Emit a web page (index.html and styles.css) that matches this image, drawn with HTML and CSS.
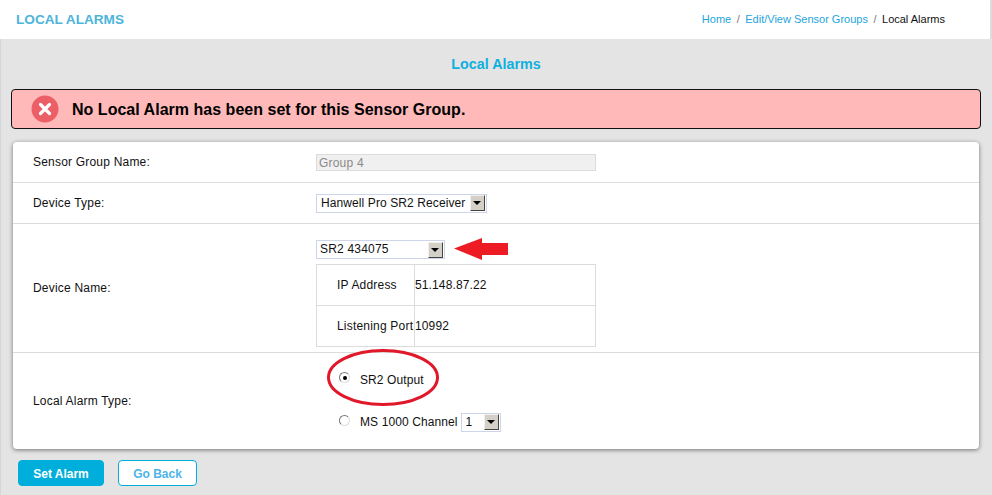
FILE: index.html
```html
<!DOCTYPE html>
<html lang="en">
<head>
<meta charset="utf-8">
<title>Local Alarms</title>
<link rel="stylesheet" href="styles.css">
</head>
<body>
<header class="topbar">
  <h1 class="page-name">LOCAL ALARMS</h1>
  <nav class="crumbs">
    <a href="#">Home</a><span class="sep">/</span><a href="#">Edit/View Sensor Groups</a><span class="sep">/</span><span class="current">Local Alarms</span>
  </nav>
</header>
<main class="content">
  <h2 class="title">Local Alarms</h2>
  <div class="alert">
    <svg class="alert-icon" viewBox="0 0 28 28" width="28" height="28" aria-hidden="true">
      <circle cx="14" cy="14" r="13.5" fill="#ec5f67"/>
      <path d="M9.5 9.5 L18.5 18.5 M18.5 9.5 L9.5 18.5" stroke="#fff" stroke-width="3.2" stroke-linecap="round"/>
    </svg>
    <span class="alert-text">No Local Alarm has been set for this Sensor Group.</span>
  </div>
  <section class="panel">
    <div class="row row-name">
      <div class="label">Sensor Group Name:</div>
      <div class="field"><div class="readonly">Group 4</div></div>
    </div>
    <div class="row row-type">
      <div class="label">Device Type:</div>
      <div class="field">
        <div class="select select-type"><span class="select-text">Hanwell Pro SR2 Receiver</span><span class="select-btn"></span></div>
      </div>
    </div>
    <div class="row row-device">
      <div class="label">Device Name:</div>
      <div class="field field-device">
        <div class="select select-device"><span class="select-text">SR2 434075</span><span class="select-btn"></span></div>
        <table class="info">
          <tr><th>IP Address</th><td>51.148.87.22</td></tr>
          <tr><th>Listening Port</th><td>10992</td></tr>
        </table>
      </div>
    </div>
    <div class="row row-alarm">
      <div class="label">Local Alarm Type:</div>
      <div class="field field-alarm">
        <div class="radio-line radio-first"><span class="radio radio-on"></span><span class="radio-text">SR2 Output</span></div>
        <div class="radio-line"><span class="radio"></span><span class="radio-text">MS 1000 Channel</span>
          <div class="select select-chan"><span class="select-text">1</span><span class="select-btn"></span></div>
        </div>
      </div>
    </div>
    <svg class="mark-arrow" viewBox="0 0 54 22" width="54" height="22" aria-hidden="true">
      <path d="M0 10.5 L28 0 L28 5 L54 5 L54 17 L28 17 L28 22 Z" fill="#ed1c24"/>
    </svg>
    <svg class="mark-ring" viewBox="0 0 114 60" width="114" height="60" aria-hidden="true">
      <ellipse cx="56" cy="28.5" rx="54.5" ry="27" fill="none" stroke="#e0182a" stroke-width="3"/>
    </svg>
  </section>
  <div class="actions">
    <button class="btn btn-primary" type="button">Set Alarm</button>
    <button class="btn btn-outline" type="button">Go Back</button>
  </div>
</main>
</body>
</html>
```
FILE: styles.css
```css
* { box-sizing: border-box; }
html, body { margin: 0; padding: 0; }
body {
  width: 992px;
  height: 495px;
  overflow: hidden;
  background: #e4e4e4;
  font-family: "Liberation Sans", Arial, sans-serif;
  font-size: 12px;
  letter-spacing: 0.2px;
  color: #111;
}
.topbar {
  height: 39px;
  background: #fff;
  display: flex;
  align-items: center;
  justify-content: space-between;
  padding: 0 45px 0 16px;
  border-right: 2px solid #dcdcdc;
}
.page-name {
  margin: 0;
  font-size: 13.6px;
  letter-spacing: 0;
  font-weight: bold;
  color: #4db4da;
}
.crumbs { font-size: 11px; letter-spacing: 0; color: #777; padding-bottom: 1px; }
.crumbs a { color: #1ea5dc; text-decoration: none; }
.crumbs .sep { margin: 0 5.5px; }
.crumbs .current { color: #111; }
.content { height: 456px; padding: 0 11px 0 10px; border-left: 1px solid #d6d6d6; }
.title {
  margin: 0;
  height: 50px;
  line-height: 50px;
  text-align: center;
  font-size: 14.3px;
  letter-spacing: 0;
  font-weight: bold;
  color: #0fb0de;
}
.alert {
  height: 40px;
  background: #ffb9b9;
  border: 1px solid #111;
  border-radius: 4px;
  display: flex;
  align-items: center;
  padding-left: 19px;
  gap: 13px;
  font-size: 16px;
  letter-spacing: 0.02px;
  font-weight: bold;
  color: #000;
}
.alert-icon { flex: none; }
.alert-text { padding-top: 2px; }
.panel {
  position: relative;
  margin: 13px 0 0 2px;
  width: 966px;
  height: 307px;
  background: #fff;
  border-radius: 4px;
  box-shadow: 0 1px 4px rgba(0, 0, 0, 0.5);
}
.row {
  display: flex;
  align-items: center;
  border-bottom: 1px solid #dcdcdc;
}
.row-name { height: 41px; }
.row-type { height: 41px; }
.row-device { height: 129px; }
.row-alarm { height: 96px; border-bottom: 0; }
.label { width: 303px; padding-left: 20px; flex: none; }
.readonly {
  width: 280px;
  height: 17px;
  line-height: 16px;
  padding-left: 2px;
  background: #f0f0f0;
  border: 1px solid #dcdcdc;
  color: #8a8a8a;
}
.select {
  display: inline-flex;
  align-items: center;
  justify-content: space-between;
  height: 19px;
  background: #fff;
  border: 1px solid #cdd5e8;
  padding: 0 1px 0 4px;
  letter-spacing: 0.1px;
}
.select-text { padding-bottom: 1px; }
.select-type { width: 171px; }
.select-device { width: 129px; padding-left: 3px; letter-spacing: 0.2px; }
.select-chan { width: 40px; margin-left: 3px; }
.select-btn {
  flex: none;
  position: relative;
  width: 15px;
  height: 16px;
  background: #d4d0c8;
  border-top: 1px solid #f2f0ec;
  border-left: 1px solid #f2f0ec;
  border-right: 1px solid #444;
  border-bottom: 1px solid #444;
}
.select-btn::after {
  content: "";
  position: absolute;
  left: 2px;
  top: 5px;
  border-left: 4px solid transparent;
  border-right: 4px solid transparent;
  border-top: 4px solid #000;
}
.field-device { display: flex; flex-direction: column; padding-top: 11px; gap: 5px; }
.info {
  width: 280px;
  height: 83px;
  border-collapse: collapse;
  table-layout: fixed;
}
.info th, .info td {
  border: 1px solid #dcdcdc;
  padding: 0;
  font-weight: normal;
  text-align: left;
}
.info th { width: 98px; padding-left: 20px; white-space: nowrap; }
.info td { letter-spacing: 0.12px; }
.radio-line {
  display: flex;
  align-items: center;
  height: 19px;
  padding-left: 23px;
  letter-spacing: 0.1px;
}
.radio-first { margin-bottom: 24px; margin-top: -1px; }
.radio-text { padding-top: 2px; }
.radio-line:not(.radio-first) .radio-text { padding-top: 0; }
.radio {
  flex: none;
  position: relative;
  top: -2px;
  width: 11px;
  height: 11px;
  margin-right: 10px;
  border-radius: 50%;
  background: #fff;
  border: 1px solid #777;
  border-right-color: #ddd;
  border-bottom-color: #ddd;
}
.radio-on::after {
  content: "";
  position: absolute;
  left: 3px;
  top: 3px;
  width: 4px;
  height: 4px;
  border-radius: 50%;
  background: #000;
}
.mark-arrow { position: absolute; left: 441px; top: 96px; }
.mark-ring { position: absolute; left: 314px; top: 207px; }
.actions { display: flex; gap: 14px; margin: 11px 0 0 7px; }
.btn {
  height: 26px;
  border-radius: 4px;
  font-family: inherit;
  font-size: 12px;
  letter-spacing: 0;
  font-weight: bold;
  padding: 2px 0 0;
}
.btn-primary { width: 86px; background: #00aedb; border: 1px solid #00aedb; color: #fff; }
.btn-outline { width: 79px; background: #fff; border: 1px solid #00aedb; color: #4db4e8; }
```
